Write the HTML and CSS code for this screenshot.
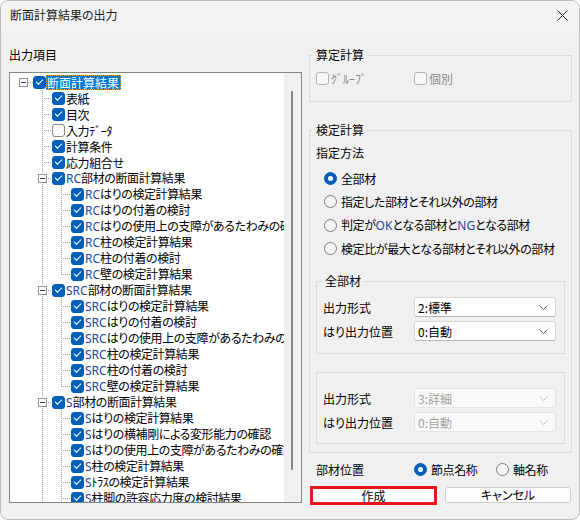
FILE: index.html
```html
<!DOCTYPE html>
<html lang="ja">
<head>
<meta charset="utf-8">
<title>断面計算結果の出力</title>
<link rel="stylesheet" href="styles.css">
</head>
<body>
<div class="window">
  <div class="titlebar">
    <span class="title">断面計算結果の出力</span>
    <svg class="close" width="11" height="11" viewBox="0 0 11 11"><path d="M.5.5l10 10M10.5.5l-10 10" stroke="#262626" stroke-width="1" fill="none"/></svg>
  </div>
  <div class="body">
    <div class="left">
      <div class="caption">出力項目</div>
      <div class="treebox">
        <div class="tree">
          <div class="row"><span class="g h"><i class="exp"></i></span><span class="cb on"></span><span class="tx sel">断面計算結果</span></div>
          <div class="row"><span class="g"></span><span class="g t"></span><span class="cb on"></span><span class="tx">表紙</span></div>
          <div class="row"><span class="g"></span><span class="g t"></span><span class="cb on"></span><span class="tx">目次</span></div>
          <div class="row"><span class="g"></span><span class="g t"></span><span class="cb"></span><span class="tx">入力ﾃﾞｰﾀ</span></div>
          <div class="row"><span class="g"></span><span class="g t"></span><span class="cb on"></span><span class="tx">計算条件</span></div>
          <div class="row"><span class="g"></span><span class="g t"></span><span class="cb on"></span><span class="tx">応力組合せ</span></div>
          <div class="row"><span class="g"></span><span class="g t"><i class="exp"></i></span><span class="cb on"></span><span class="tx"><span class="en">RC</span>部材の断面計算結果</span></div>
          <div class="row"><span class="g"></span><span class="g v"></span><span class="g t"></span><span class="cb on"></span><span class="tx"><span class="en">RC</span>はりの検定計算結果</span></div>
          <div class="row"><span class="g"></span><span class="g v"></span><span class="g t"></span><span class="cb on"></span><span class="tx"><span class="en">RC</span>はりの付着の検討</span></div>
          <div class="row"><span class="g"></span><span class="g v"></span><span class="g t"></span><span class="cb on"></span><span class="tx"><span class="en">RC</span>はりの使用上の支障があるたわみの確認</span></div>
          <div class="row"><span class="g"></span><span class="g v"></span><span class="g t"></span><span class="cb on"></span><span class="tx"><span class="en">RC</span>柱の検定計算結果</span></div>
          <div class="row"><span class="g"></span><span class="g v"></span><span class="g t"></span><span class="cb on"></span><span class="tx"><span class="en">RC</span>柱の付着の検討</span></div>
          <div class="row"><span class="g"></span><span class="g v"></span><span class="g l"></span><span class="cb on"></span><span class="tx"><span class="en">RC</span>壁の検定計算結果</span></div>
          <div class="row"><span class="g"></span><span class="g t"><i class="exp"></i></span><span class="cb on"></span><span class="tx"><span class="en">SRC</span>部材の断面計算結果</span></div>
          <div class="row"><span class="g"></span><span class="g v"></span><span class="g t"></span><span class="cb on"></span><span class="tx"><span class="en">SRC</span>はりの検定計算結果</span></div>
          <div class="row"><span class="g"></span><span class="g v"></span><span class="g t"></span><span class="cb on"></span><span class="tx"><span class="en">SRC</span>はりの付着の検討</span></div>
          <div class="row"><span class="g"></span><span class="g v"></span><span class="g t"></span><span class="cb on"></span><span class="tx"><span class="en">SRC</span>はりの使用上の支障があるたわみの確認</span></div>
          <div class="row"><span class="g"></span><span class="g v"></span><span class="g t"></span><span class="cb on"></span><span class="tx"><span class="en">SRC</span>柱の検定計算結果</span></div>
          <div class="row"><span class="g"></span><span class="g v"></span><span class="g t"></span><span class="cb on"></span><span class="tx"><span class="en">SRC</span>柱の付着の検討</span></div>
          <div class="row"><span class="g"></span><span class="g v"></span><span class="g l"></span><span class="cb on"></span><span class="tx"><span class="en">SRC</span>壁の検定計算結果</span></div>
          <div class="row"><span class="g"></span><span class="g t"><i class="exp"></i></span><span class="cb on"></span><span class="tx"><span class="en">S</span>部材の断面計算結果</span></div>
          <div class="row"><span class="g"></span><span class="g v"></span><span class="g t"></span><span class="cb on"></span><span class="tx"><span class="en">S</span>はりの検定計算結果</span></div>
          <div class="row"><span class="g"></span><span class="g v"></span><span class="g t"></span><span class="cb on"></span><span class="tx"><span class="en">S</span>はりの横補剛による変形能力の確認</span></div>
          <div class="row"><span class="g"></span><span class="g v"></span><span class="g t"></span><span class="cb on"></span><span class="tx"><span class="en">S</span>はりの使用上の支障があるたわみの確認</span></div>
          <div class="row"><span class="g"></span><span class="g v"></span><span class="g t"></span><span class="cb on"></span><span class="tx"><span class="en">S</span>柱の検定計算結果</span></div>
          <div class="row"><span class="g"></span><span class="g v"></span><span class="g t"></span><span class="cb on"></span><span class="tx"><span class="en">S</span>ﾄﾗｽの検定計算結果</span></div>
          <div class="row"><span class="g"></span><span class="g v"></span><span class="g t"></span><span class="cb on"></span><span class="tx"><span class="en">S</span>柱脚の許容応力度の検討結果</span></div>
        </div>
        <div class="vscroll"><div class="thumb"></div></div>
      </div>
    </div>
    <div class="right">
      <fieldset class="grp grp-santei">
        <legend>算定計算</legend>
        <div class="opts">
          <div class="opt dis"><span class="chk"></span>ｸﾞﾙｰﾌﾟ</div>
          <div class="opt dis"><span class="chk"></span>個別</div>
        </div>
      </fieldset>
      <fieldset class="grp grp-kentei">
        <legend>検定計算</legend>
        <div class="line">指定方法</div>
        <div class="radios">
          <div class="ropt"><span class="radio on"></span><span>全部材</span></div>
          <div class="ropt"><span class="radio"></span><span>指定した部材とそれ以外の部材</span></div>
          <div class="ropt"><span class="radio"></span><span>判定が<span class="en">OK</span>となる部材と<span class="en">NG</span>となる部材</span></div>
          <div class="ropt"><span class="radio"></span><span>検定比が最大となる部材とそれ以外の部材</span></div>
        </div>
        <fieldset class="sub sub1">
          <legend>全部材</legend>
          <div class="form">
            <span>出力形式</span>
            <div class="combo"><span>2:標準</span><svg width="9" height="5" viewBox="0 0 9 5"><path d="M.5.5l4 4 4-4" fill="none" stroke="#5f5f5f"/></svg></div>
            <span>はり出力位置</span>
            <div class="combo"><span>0:自動</span><svg width="9" height="5" viewBox="0 0 9 5"><path d="M.5.5l4 4 4-4" fill="none" stroke="#5f5f5f"/></svg></div>
          </div>
        </fieldset>
        <fieldset class="sub sub2">
          <div class="form">
            <span>出力形式</span>
            <div class="combo dis"><span>3:詳細</span><svg width="9" height="5" viewBox="0 0 9 5"><path d="M.5.5l4 4 4-4" fill="none" stroke="#c6c6c6"/></svg></div>
            <span>はり出力位置</span>
            <div class="combo dis"><span>0:自動</span><svg width="9" height="5" viewBox="0 0 9 5"><path d="M.5.5l4 4 4-4" fill="none" stroke="#c6c6c6"/></svg></div>
          </div>
        </fieldset>
      </fieldset>
      <div class="pos">
        <span>部材位置</span>
        <div class="ropt"><span class="radio on"></span><span>節点名称</span></div>
        <div class="ropt"><span class="radio"></span><span>軸名称</span></div>
      </div>
      <div class="buttons">
        <div class="btn primary">作成</div>
        <div class="btn">キャンセル</div>
      </div>
    </div>
  </div>
</div>
</body>
</html>
```
FILE: styles.css
```css
* { box-sizing: border-box; }
html, body { margin: 0; padding: 0; }
body {
  width: 580px;
  height: 520px;
  background: #ffffff;
  font-family: "Noto Sans CJK JP", "Noto Sans", sans-serif;
  font-size: 12px;
  color: #000;
  font-feature-settings: "palt";
  text-autospace: no-autospace;
  text-spacing-trim: space-all;
}
.window {
  width: 580px;
  height: 520px;
  border: 1px solid #bdbdbd;
  border-radius: 8px;
  background: #f0f0f0;
  overflow: hidden;
  display: flex;
  flex-direction: column;
}
.titlebar {
  height: 30px;
  flex: none;
  background: #f3f3f3;
  display: flex;
  align-items: center;
  justify-content: space-between;
  padding: 0 11px 2px 9px;
}
.title { line-height: 16px; color: #1a1a1a; }
.close { display: block; }

.body {
  display: grid;
  grid-template-columns: 293px 263px;
  column-gap: 7px;
  padding-left: 8px;
  align-items: start;
}

/* left: tree */
.caption { margin-top: 16px; line-height: 16px; }
.treebox {
  margin-top: 9px;
  height: 431px;
  border: 1px solid #868686;
  background: #fff;
  display: flex;
}
.tree {
  flex: 1;
  min-width: 0;
  overflow: hidden;
  padding: 1px 0 0 4px;
}
.vscroll {
  width: 17px;
  flex: none;
  background: #f0f0f0;
  padding: 18px 0 0 7px;
}
.thumb { width: 2px; height: 379px; background: #858585; border-radius: 1px; }

.row {
  display: flex;
  align-items: center;
  height: 16px;
  white-space: nowrap;
}
.g {
  flex: none;
  width: 19px;
  height: 16px;
  display: flex;
  align-items: center;
  justify-content: center;
  background-repeat: no-repeat;
}
.v {
  background-image: repeating-linear-gradient(to bottom, #a2a2a2 0 1px, transparent 1px 2px);
  background-size: 1px 16px;
  background-position: 9px 0;
}
.t {
  background-image:
    repeating-linear-gradient(to bottom, #a2a2a2 0 1px, transparent 1px 2px),
    repeating-linear-gradient(to right, #a2a2a2 0 1px, transparent 1px 2px);
  background-size: 1px 16px, 8px 1px;
  background-position: 9px 0, 11px 8px;
}
.l {
  background-image:
    repeating-linear-gradient(to bottom, #a2a2a2 0 1px, transparent 1px 2px),
    repeating-linear-gradient(to right, #a2a2a2 0 1px, transparent 1px 2px);
  background-size: 1px 9px, 8px 1px;
  background-position: 9px 0, 11px 8px;
}
.h {
  background-image: repeating-linear-gradient(to right, #a2a2a2 0 1px, transparent 1px 2px);
  background-size: 6px 1px;
  background-position: 14px 8px;
}
.exp {
  width: 9px;
  height: 9px;
  border: 1px solid #939393;
  background: #fff;
  display: flex;
  align-items: center;
  justify-content: center;
}
.exp::after { content: ""; width: 5px; height: 1px; background: #23427a; }

.cb {
  flex: none;
  width: 13px;
  height: 13px;
  border-radius: 3px;
  border: 1px solid #8a8a8a;
  background: #f8f8f8;
  display: flex;
  align-items: center;
  justify-content: center;
}
.cb.on { background: #005fb8; border-color: #005fb8; }
.cb.on::after {
  content: "";
  width: 6px;
  height: 3px;
  border-left: 1.3px solid #fff;
  border-bottom: 1.3px solid #fff;
  transform: rotate(-45deg);
  margin-top: -2px;
}
.tx {
  border: 1px solid transparent;
  padding: 0 1px 0 0;
  line-height: 13px;
  letter-spacing: -0.4px;
}
.tx.sel {
  background: #0078d7;
  color: #fff;
  border: 1px dotted #f3a33a;
  letter-spacing: 0;
}
.en {
  color: #24459f;
  font-family: "Noto Sans", "Liberation Sans", sans-serif;
  letter-spacing: 0;
}
.tx.sel .en { color: #fff; }

/* right */
.grp {
  margin: 0;
  border: 1px solid #dcdcdc;
  min-width: 0;
}
.grp > legend {
  padding: 0 3px;
  margin-left: -3px;
  line-height: 14px;
}
.grp-santei { margin-top: 17px; padding: 8px 6px 15px 6px; }
.opts { display: grid; grid-template-columns: 98px auto; }
.opt {
  display: flex;
  align-items: center;
  height: 16px;
  gap: 2px;
}
.opt.dis { color: #8c8c8c; }
.chk {
  width: 13px;
  height: 13px;
  border: 1px solid #b4b4b4;
  border-radius: 3px;
  background: #f7f7f7;
}

.grp-kentei { margin-top: 21px; padding: 8px 6px 8px 6px; }
.line { line-height: 16px; }
.radios {
  margin: 9px 0 0 8px;
  display: flex;
  flex-direction: column;
  gap: 7.5px;
}
.ropt {
  display: flex;
  align-items: center;
  height: 16px;
  gap: 4px;
  white-space: nowrap;
  letter-spacing: -0.4px;
}
.radio {
  flex: none;
  width: 13px;
  height: 13px;
  border-radius: 50%;
  border: 1px solid #7d7d7d;
  background: #f6f6f6;
  display: flex;
  align-items: center;
  justify-content: center;
}
.radio.on { background: #005fb8; border-color: #005fb8; }
.radio.on::after {
  content: "";
  width: 5px;
  height: 5px;
  border-radius: 50%;
  background: #fff;
}

.sub {
  margin: 17.5px 0 0 0;
  border: 1px solid #dcdcdc;
  padding: 9px 7px 12px 6px;
  min-width: 0;
}
.sub > legend { padding: 0 2px; line-height: 14px; }
.sub2 { margin-top: 18px; padding: 15px 7px 11px 6px; }
.form {
  display: grid;
  grid-template-columns: 91px 142px;
  row-gap: 4px;
  align-items: center;
}
.combo {
  height: 20px;
  border: 1px solid #d6d6d6;
  border-bottom-color: #b8b8b8;
  border-radius: 3px;
  background: #fff;
  display: flex;
  align-items: center;
  justify-content: space-between;
  padding: 0 7px 0 3px;
}
.combo svg { display: block; }
.combo.dis {
  background: #f9f9f9;
  border-color: #e4e4e4;
  color: #a2a2a2;
}

.pos {
  margin: 8px 0 0 7px;
  display: grid;
  grid-template-columns: 98px 82px auto;
  height: 16px;
  align-items: center;
}
.buttons {
  margin: 9px 0 0 1px;
  display: grid;
  grid-template-columns: 127px 126px;
  column-gap: 8px;
  align-items: start;
}
.btn {
  height: 16px;
  margin-top: 1px;
  border: 1px solid #cdcdcd;
  border-radius: 3px;
  background: #fdfdfd;
  line-height: 14px;
  text-align: center;
}
.btn.primary {
  height: 19px;
  margin-top: 0;
  border: 3px solid #e8141c;
  border-radius: 0;
  background: #fff;
  line-height: 13px;
}
```
